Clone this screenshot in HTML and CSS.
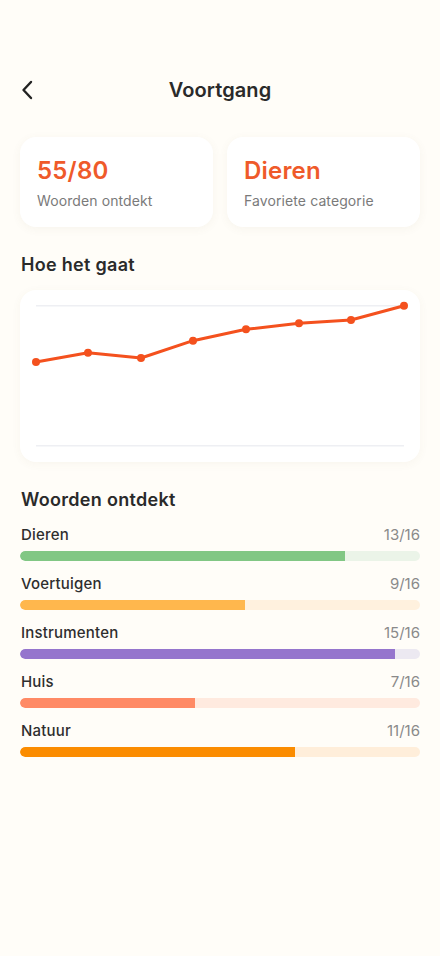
FILE: index.html
```html
<!DOCTYPE html>
<html lang="nl">
<head>
<meta charset="utf-8">
<meta name="viewport" content="width=device-width, initial-scale=1">
<title>Voortgang</title>
<link rel="stylesheet" href="styles.css">
</head>
<body>
<main class="page">
  <header class="topbar">
    <button class="back" aria-label="Terug">
      <svg width="14" height="20" viewBox="0 0 14 20" fill="none"><path d="M11 2 L3.5 10 L11 18" stroke="#222" stroke-width="2.4" stroke-linecap="round" stroke-linejoin="round"/></svg>
    </button>
    <h1 class="title">Voortgang</h1>
    <span class="spacer"></span>
  </header>

  <section class="stats">
    <div class="stat-card">
      <div class="stat-value">55/80</div>
      <div class="stat-label">Woorden ontdekt</div>
    </div>
    <div class="stat-card">
      <div class="stat-value">Dieren</div>
      <div class="stat-label">Favoriete categorie</div>
    </div>
  </section>

  <h2 class="section-title">Hoe het gaat</h2>
  <div class="chart-card">
    <svg class="chart" width="400" height="172" viewBox="0 0 400 172">
      <line x1="16" y1="15.7" x2="384" y2="15.7" stroke="#EEEFF3" stroke-width="1.5"/>
      <line x1="16" y1="155.7" x2="384" y2="155.7" stroke="#EEEFF3" stroke-width="1.5"/>
      <polyline points="16,72 68,62.7 121,68 173,50.7 226,39.3 279,33.3 331,30 384,15.7" fill="none" stroke="#F4511E" stroke-width="3" stroke-linejoin="round" stroke-linecap="round"/>
      <g fill="#F4511E">
        <circle cx="16" cy="72" r="4"/>
        <circle cx="68" cy="62.7" r="4"/>
        <circle cx="121" cy="68" r="4"/>
        <circle cx="173" cy="50.7" r="4"/>
        <circle cx="226" cy="39.3" r="4"/>
        <circle cx="279" cy="33.3" r="4"/>
        <circle cx="331" cy="30" r="4"/>
        <circle cx="384" cy="15.7" r="4"/>
      </g>
    </svg>
  </div>

  <h2 class="section-title words-title">Woorden ontdekt</h2>
  <ul class="cats">
    <li class="cat cat-green">
      <div class="cat-row"><span class="cat-name">Dieren</span><span class="cat-count">13/16</span></div>
      <div class="track"><div class="fill" style="width:81.25%"></div></div>
    </li>
    <li class="cat cat-amber">
      <div class="cat-row"><span class="cat-name">Voertuigen</span><span class="cat-count">9/16</span></div>
      <div class="track"><div class="fill" style="width:56.25%"></div></div>
    </li>
    <li class="cat cat-purple">
      <div class="cat-row"><span class="cat-name">Instrumenten</span><span class="cat-count">15/16</span></div>
      <div class="track"><div class="fill" style="width:93.75%"></div></div>
    </li>
    <li class="cat cat-salmon">
      <div class="cat-row"><span class="cat-name">Huis</span><span class="cat-count">7/16</span></div>
      <div class="track"><div class="fill" style="width:43.75%"></div></div>
    </li>
    <li class="cat cat-orange">
      <div class="cat-row"><span class="cat-name">Natuur</span><span class="cat-count">11/16</span></div>
      <div class="track"><div class="fill" style="width:68.75%"></div></div>
    </li>
  </ul>
</main>
</body>
</html>
```

FILE: styles.css
```css
* { box-sizing: border-box; }

html, body {
  margin: 0;
  padding: 0;
  background: #FFFDF8;
}

body {
  font-family: Inter, "Noto Sans", "Liberation Sans", sans-serif;
  color: #2A2A2A;
  width: 440px;
  min-height: 956px;
}

.page {
  padding: 66px 20px 40px;
  display: flex;
  flex-direction: column;
}

.topbar {
  height: 48px;
  display: flex;
  align-items: center;
  justify-content: space-between;
}

.back {
  width: 40px;
  height: 40px;
  padding: 0;
  border: 0;
  background: transparent;
  display: flex;
  align-items: center;
  justify-content: flex-start;
  cursor: pointer;
}

.spacer { width: 40px; }

.title {
  margin: 0;
  font-size: 20px;
  line-height: 24px;
  font-weight: 600;
  letter-spacing: 0.1px;
  color: #2A2A2A;
}

.stats {
  margin-top: 23px;
  display: grid;
  grid-template-columns: 1fr 1fr;
  gap: 14px;
}

.stat-card {
  background: #FFFFFF;
  border-radius: 16px;
  height: 90px;
  padding: 18px 17px 16px;
  display: flex;
  flex-direction: column;
  gap: 4px;
  box-shadow: 0 2px 10px rgba(120, 100, 60, 0.06);
}

.stat-value {
  font-size: 24px;
  line-height: 32px;
  font-weight: 600;
  letter-spacing: 0.2px;
  color: #EF5A2A;
}

.stat-label {
  font-size: 14px;
  line-height: 20px;
  letter-spacing: 0.1px;
  color: #7A7A7A;
}

.section-title {
  margin: 26px 0 0 1px;
  font-size: 18px;
  line-height: 24px;
  font-weight: 600;
  letter-spacing: 0.3px;
  color: #2A2A2A;
}

.chart-card {
  margin-top: 13px;
  height: 172px;
  background: #FFFFFF;
  border-radius: 16px;
  box-shadow: 0 2px 10px rgba(120, 100, 60, 0.05);
  overflow: hidden;
}

.chart { display: block; }

.words-title { margin-top: 26px; }

.cats {
  list-style: none;
  margin: 13px 0 0;
  padding: 0;
  display: flex;
  flex-direction: column;
  gap: 13px;
}

.cat {
  display: flex;
  flex-direction: column;
  gap: 6px;
}

.cat-row {
  display: flex;
  justify-content: space-between;
  align-items: baseline;
  line-height: 20px;
}

.cat-name {
  font-size: 15px;
  font-weight: 500;
  letter-spacing: 0.2px;
  color: #2E2E2E;
  padding-left: 1px;
}

.cat-count {
  font-size: 15px;
  color: #8A8A8A;
}

.track {
  height: 10px;
  border-radius: 5px;
  overflow: hidden;
  background: var(--track);
}

.fill {
  height: 100%;
  background: var(--fill);
  border-radius: 5px 0 0 5px;
}

.cat-green  { --fill: #81C784; --track: #EBF4E8; }
.cat-amber  { --fill: #FFB74D; --track: #FFF1DE; }
.cat-purple { --fill: #9575CD; --track: #ECE9F1; }
.cat-salmon { --fill: #FF8A65; --track: #FFEADF; }
.cat-orange { --fill: #FB8C00; --track: #FFEEDA; }
```
